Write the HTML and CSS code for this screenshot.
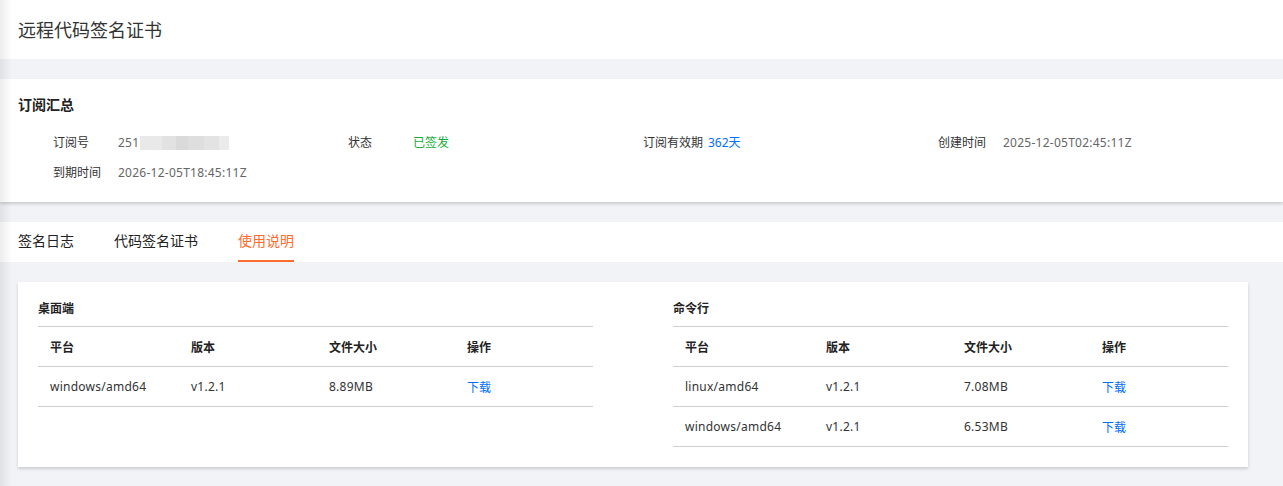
FILE: index.html
```html
<!DOCTYPE html>
<html lang="zh-CN">
<head>
<meta charset="utf-8">
<title>远程代码签名证书</title>
<link rel="stylesheet" href="styles.css">
</head>
<body>
<div class="edge-shade"></div>
<header class="page-head">
  <h1 class="page-title">远程代码签名证书</h1>
</header>

<section class="summary">
  <h2 class="summary-title">订阅汇总</h2>
  <div class="summary-grid">
    <div class="item"><span class="label">订阅号</span><span class="value">251<span class="mask"><i class="m1"></i><i class="m2"></i><i class="m3"></i><i class="m4"></i><i class="m5"></i><i class="m6"></i></span></span></div>
    <div class="item"><span class="label">状态</span><span class="value ok">已签发</span></div>
    <div class="item"><span class="label">订阅有效期</span><span class="value link">362天</span></div>
    <div class="item"><span class="label">创建时间</span><span class="value">2025-12-05T02:45:11Z</span></div>
    <div class="item"><span class="label">到期时间</span><span class="value">2026-12-05T18:45:11Z</span></div>
  </div>
</section>

<nav class="tabs">
  <a class="tab">签名日志</a>
  <a class="tab">代码签名证书</a>
  <a class="tab active">使用说明</a>
</nav>

<section class="content">
  <div class="block">
    <h3 class="block-title">桌面端</h3>
    <div class="table">
      <div class="row head"><span>平台</span><span>版本</span><span>文件大小</span><span>操作</span></div>
      <div class="row"><span class="lat">windows/amd64</span><span class="lat">v1.2.1</span><span class="lat">8.89MB</span><span class="link">下载</span></div>
    </div>
  </div>
  <div class="block">
    <h3 class="block-title">命令行</h3>
    <div class="table">
      <div class="row head"><span>平台</span><span>版本</span><span>文件大小</span><span>操作</span></div>
      <div class="row"><span class="lat">linux/amd64</span><span class="lat">v1.2.1</span><span class="lat">7.08MB</span><span class="link">下载</span></div>
      <div class="row"><span class="lat">windows/amd64</span><span class="lat">v1.2.1</span><span class="lat">6.53MB</span><span class="link">下载</span></div>
    </div>
  </div>
</section>
</body>
</html>
```

FILE: styles.css
```css
* { box-sizing: border-box; }
html, body { margin: 0; padding: 0; }
body {
  background: #f2f3f7;
  font-family: "Noto Sans", "Noto Sans CJK SC", sans-serif;
  font-size: 12px;
  color: #333;
  width: 1283px;
  height: 486px;
  overflow: hidden;
}
.edge-shade {
  position: fixed;
  left: 0; top: 0; bottom: 0;
  width: 12px;
  background: linear-gradient(to right, rgba(0,0,0,0.07), rgba(0,0,0,0));
  pointer-events: none;
  z-index: 10;
}
.page-head {
  height: 59px;
  background: #fff;
  display: flex;
  align-items: center;
  padding-left: 18px;
}
.page-title {
  margin: 0;
  font-size: 18px;
  font-weight: 400;
  color: #333;
  line-height: 24px;
}
.summary {
  margin-top: 20px;
  background: #fff;
  padding: 16px 18px 14px;
  box-shadow: 0 2px 3px rgba(0,0,0,0.16);
  position: relative;
}
.summary-title {
  margin: 0;
  font-size: 14px;
  font-weight: 700;
  line-height: 20px;
  color: #222;
}
.summary-grid {
  margin-top: 13px;
  padding-left: 35px;
  display: grid;
  grid-template-columns: repeat(4, 295px);
}
.item {
  display: flex;
  line-height: 30px;
  height: 30px;
}
.label {
  width: 65px;
  color: #333;
  flex: none;
}
.value { color: #666; display: flex; align-items: center; letter-spacing: 0.25px; }
.value.ok { color: #12ad3a; letter-spacing: 0; }
.value.link { letter-spacing: 0; }
.link { color: #006eff; }
.mask {
  display: inline-flex;
  height: 14px;
  margin-left: 1px;
}
.mask i { display: block; height: 14px; }
.mask .m1 { width: 22px; background: #e9e9e9; }
.mask .m2 { width: 14px; background: #e2e2e2; }
.mask .m3 { width: 12px; background: #dadada; }
.mask .m4 { width: 16px; background: #dedede; }
.mask .m5 { width: 15px; background: #e3e3e3; }
.mask .m6 { width: 10px; background: #ebebeb; }

.tabs {
  margin-top: 20px;
  background: #fff;
  height: 40px;
  display: flex;
  gap: 40px;
  padding-left: 18px;
}
.tab {
  font-size: 14px;
  line-height: 38px;
  height: 40px;
  color: #222;
  border-bottom: 2px solid transparent;
  cursor: pointer;
}
.tab.active {
  color: #ff6c2c;
  border-bottom-color: #ff6c2c;
}
.content {
  margin: 20px 35px 0 18px;
  background: #fff;
  padding: 20px 20px 20px;
  display: grid;
  grid-template-columns: 555px 555px;
  column-gap: 80px;
  box-shadow: 0 2px 3px rgba(0,0,0,0.16);
}
.block-title {
  margin: 0 0 10px;
  font-size: 12px;
  font-weight: 700;
  line-height: 14px;
  color: #222;
}
.table { border-top: 1px solid #cfcfcf; }
.row {
  display: grid;
  grid-template-columns: 141px 138px 138px 138px;
  height: 40px;
  align-items: center;
  border-bottom: 1px solid #cfcfcf;
  color: #333;
}
.row span { padding-left: 12px; }
.row .lat { letter-spacing: 0.25px; }
.row.head span { font-weight: 700; color: #222; }
.row .link { color: #006eff; }
```
